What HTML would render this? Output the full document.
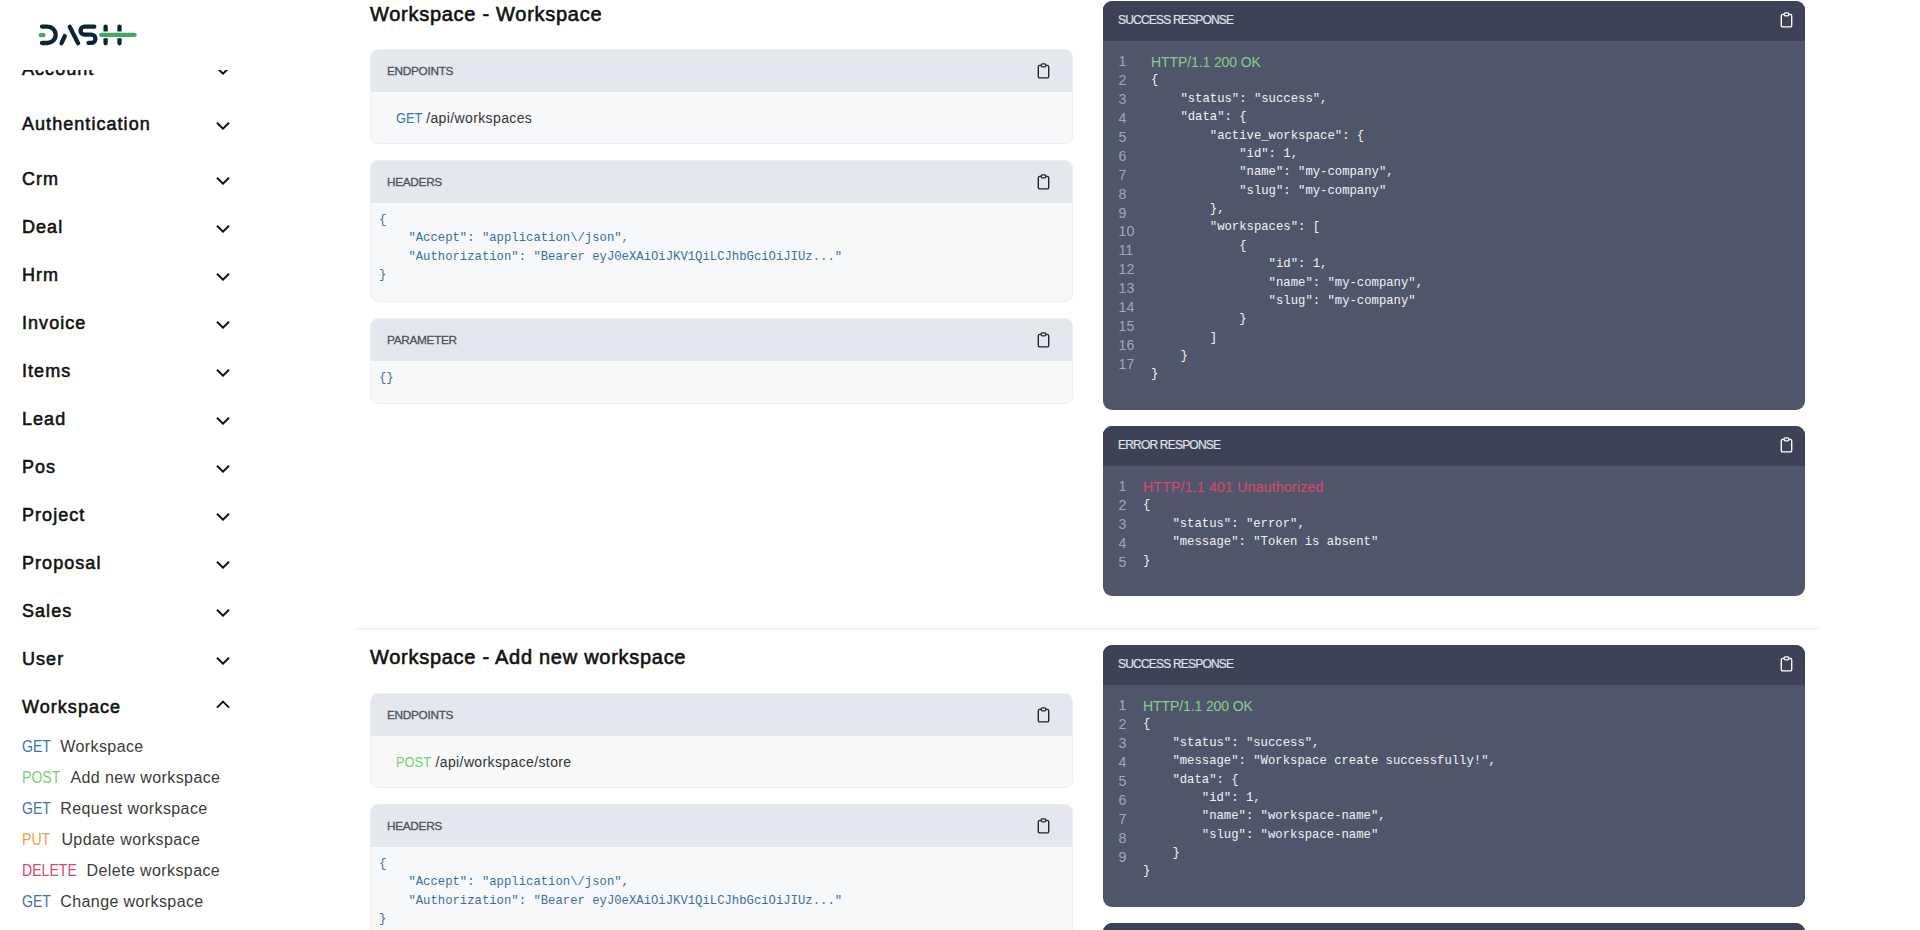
<!DOCTYPE html>
<html><head><meta charset="utf-8"><title>API Docs</title>
<style>
html,body{margin:0;padding:0;width:1920px;height:930px;overflow:hidden;background:#fff;font-family:"Liberation Sans",sans-serif;}
*{box-sizing:border-box}
.a{position:absolute}
/* sidebar */
.si{position:absolute;left:22px;font-size:18px;font-weight:normal;-webkit-text-stroke:0.55px #111;letter-spacing:1.05px;color:#111;line-height:24px;height:24px;white-space:nowrap}
.chev{position:absolute;left:215.8px;width:14px;height:10px}
.sub{position:absolute;left:22px;font-size:16px;color:#3b3b3b;line-height:20px;height:20px;white-space:nowrap}
.m{display:inline-block;transform:scaleX(0.88);transform-origin:0 0}.nm{position:absolute;top:0;letter-spacing:0.4px}
.get{color:#3a74a8}.post{color:#7bcd73}.put{color:#e3a548}.del{color:#d9466f}
.logo{position:absolute;left:0;top:0;width:300px;height:70px;background:#fff}
/* main */
.title{position:absolute;left:370px;font-size:20px;font-weight:normal;-webkit-text-stroke:0.6px #111;letter-spacing:0.72px;color:#111;line-height:26px;white-space:nowrap}
.card{position:absolute;left:370px;width:703px;border:1px solid #eceef2;border-radius:8px;background:#f7f8fa;overflow:hidden}
.card .hd{height:42px;background:#e4e7ed;position:relative}
.card .hd span{position:absolute;left:16px;top:14px;font-size:11.8px;font-weight:normal;-webkit-text-stroke:0.3px #4b5262;color:#4b5262;letter-spacing:-0.3px;line-height:14px}
.clip{position:absolute;width:13px;height:15.8px}
.em{display:inline-block;transform:scaleX(0.92);transform-origin:0 0}.pth{margin-left:-2.5px;letter-spacing:0.38px}
.ep{position:absolute;left:25px;font-size:14px;color:#333;line-height:18px;white-space:nowrap}
.code{position:absolute;left:8px;margin:0;font-family:"Liberation Mono",monospace;font-size:12.25px;line-height:18.375px;color:#3a6f9e;white-space:pre}
.panel{position:absolute;left:1103px;width:702px;border-radius:9px;background:#50566a;overflow:hidden}
.panel .hd{height:40px;background:#3e4256;position:relative}
.panel .hd span{position:absolute;left:15px;top:12px;font-size:12px;color:#dfe3ea;-webkit-text-stroke:0.2px #dfe3ea;letter-spacing:-0.8px;line-height:14px;white-space:nowrap}
.nums{position:absolute;left:15.5px;font-size:14.2px;line-height:18.93px;color:#a3a7b3;white-space:pre}
.pcode{position:absolute;margin:0;font-family:"Liberation Mono",monospace;font-size:12.25px;line-height:18.375px;color:#f1f2f4;white-space:pre}
.http{font-family:"Liberation Sans",sans-serif;font-size:14px;letter-spacing:0.25px;line-height:0;position:relative;top:1.5px}
.ok{color:#86cf8c;letter-spacing:-0.1px}.bad{color:#e0456c}
.sep{position:absolute;left:355px;width:1465px;top:628px;height:1px;background:#eeeeee}
</style></head><body>

<!-- SIDEBAR -->
<div class="si" style="top:57px">Account</div>
<div class="si" style="top:112px">Authentication</div>
<div class="si" style="top:167px">Crm</div>
<div class="si" style="top:215px">Deal</div>
<div class="si" style="top:263px">Hrm</div>
<div class="si" style="top:311px">Invoice</div>
<div class="si" style="top:359px">Items</div>
<div class="si" style="top:407px">Lead</div>
<div class="si" style="top:455px">Pos</div>
<div class="si" style="top:503px">Project</div>
<div class="si" style="top:551px">Proposal</div>
<div class="si" style="top:599px">Sales</div>
<div class="si" style="top:647px">User</div>
<div class="si" style="top:695px">Workspace</div>

<svg class="chev" style="top:66px" viewBox="0 0 14 10"><path d="M1 1.7 L7 7.7 L13 1.7" fill="none" stroke="#111" stroke-width="2"/></svg>
<svg class="chev" style="top:121px" viewBox="0 0 14 10"><path d="M1 1.7 L7 7.7 L13 1.7" fill="none" stroke="#111" stroke-width="2"/></svg>
<svg class="chev" style="top:176px" viewBox="0 0 14 10"><path d="M1 1.7 L7 7.7 L13 1.7" fill="none" stroke="#111" stroke-width="2"/></svg>
<svg class="chev" style="top:224px" viewBox="0 0 14 10"><path d="M1 1.7 L7 7.7 L13 1.7" fill="none" stroke="#111" stroke-width="2"/></svg>
<svg class="chev" style="top:272px" viewBox="0 0 14 10"><path d="M1 1.7 L7 7.7 L13 1.7" fill="none" stroke="#111" stroke-width="2"/></svg>
<svg class="chev" style="top:320px" viewBox="0 0 14 10"><path d="M1 1.7 L7 7.7 L13 1.7" fill="none" stroke="#111" stroke-width="2"/></svg>
<svg class="chev" style="top:368px" viewBox="0 0 14 10"><path d="M1 1.7 L7 7.7 L13 1.7" fill="none" stroke="#111" stroke-width="2"/></svg>
<svg class="chev" style="top:416px" viewBox="0 0 14 10"><path d="M1 1.7 L7 7.7 L13 1.7" fill="none" stroke="#111" stroke-width="2"/></svg>
<svg class="chev" style="top:464px" viewBox="0 0 14 10"><path d="M1 1.7 L7 7.7 L13 1.7" fill="none" stroke="#111" stroke-width="2"/></svg>
<svg class="chev" style="top:512px" viewBox="0 0 14 10"><path d="M1 1.7 L7 7.7 L13 1.7" fill="none" stroke="#111" stroke-width="2"/></svg>
<svg class="chev" style="top:560px" viewBox="0 0 14 10"><path d="M1 1.7 L7 7.7 L13 1.7" fill="none" stroke="#111" stroke-width="2"/></svg>
<svg class="chev" style="top:608px" viewBox="0 0 14 10"><path d="M1 1.7 L7 7.7 L13 1.7" fill="none" stroke="#111" stroke-width="2"/></svg>
<svg class="chev" style="top:656px" viewBox="0 0 14 10"><path d="M1 1.7 L7 7.7 L13 1.7" fill="none" stroke="#111" stroke-width="2"/></svg>
<svg class="chev" style="top:700px" viewBox="0 0 14 10"><path d="M1 7.6 L7 1.6 L13 7.6" fill="none" stroke="#111" stroke-width="2"/></svg>

<div class="sub" style="top:737px"><span class="get m">GET</span><span class="nm" style="left:38.3px">Workspace</span></div>
<div class="sub" style="top:768px"><span class="post m">POST</span><span class="nm" style="left:48.4px">Add new workspace</span></div>
<div class="sub" style="top:799px"><span class="get m">GET</span><span class="nm" style="left:38.3px">Request workspace</span></div>
<div class="sub" style="top:830px"><span class="put m">PUT</span><span class="nm" style="left:39.4px">Update workspace</span></div>
<div class="sub" style="top:861px"><span class="del m">DELETE</span><span class="nm" style="left:64.6px">Delete workspace</span></div>
<div class="sub" style="top:892px"><span class="get m">GET</span><span class="nm" style="left:38.3px">Change workspace</span></div>

<div class="logo">
<svg width="300" height="70" viewBox="0 0 300 70" style="position:absolute;left:0;top:0">
<g fill="none" stroke="#0b2637" stroke-width="4.3" stroke-linecap="round">
<path d="M42 26.6 H47.5 A8.2 8.2 0 0 1 47.5 43 H42"/>
<path d="M61.5 43.2 L64.8 36.1"/>
<path d="M69.7 26.8 L78.1 43.2"/>
<path d="M94.3 26.7 H84.5 A3.95 3.95 0 0 0 84.5 34.6 H91.3 A4.15 4.15 0 0 1 91.3 42.9 H88.5"/>
<path d="M105.6 26.6 V43.3 M119.5 26.6 V43.3"/>
</g>
<path d="M101.25 34.85 H134.5" stroke="#fff" stroke-width="6.6" stroke-linecap="round"/>
<path d="M101.25 34.85 H134.5" stroke="#3dac63" stroke-width="4.4" stroke-linecap="round"/>
<path d="M40.8 35.1 H43.4" stroke="#3dac63" stroke-width="4.4" stroke-linecap="round"/>
</svg>
</div>

<!-- MAIN -->
<div id="main">
<div class="title" style="top:1px">Workspace - Workspace</div>
<div class="card" style="top:49px;height:95px"><div class="hd"><span>ENDPOINTS</span><svg class="clip" style="left:666px;top:13px" viewBox="0 0 14 17"><path d="M4.3 2.6 H3 A1.6 1.6 0 0 0 1.4 4.2 V14.4 A1.6 1.6 0 0 0 3 16 H11 A1.6 1.6 0 0 0 12.6 14.4 V4.2 A1.6 1.6 0 0 0 11 2.6 H9.7" fill="none" stroke="#1f2533" stroke-width="1.5"/><rect x="4.4" y="1" width="5.2" height="3.2" rx="1.4" fill="none" stroke="#1f2533" stroke-width="1.4"/></svg></div><div class="ep" style="top:59px"><span class="get em">GET</span> <span class="pth">/api/workspaces</span></div></div>
<div class="card" style="top:160px;height:142px"><div class="hd"><span>HEADERS</span><svg class="clip" style="left:666px;top:13px" viewBox="0 0 14 17"><path d="M4.3 2.6 H3 A1.6 1.6 0 0 0 1.4 4.2 V14.4 A1.6 1.6 0 0 0 3 16 H11 A1.6 1.6 0 0 0 12.6 14.4 V4.2 A1.6 1.6 0 0 0 11 2.6 H9.7" fill="none" stroke="#1f2533" stroke-width="1.5"/><rect x="4.4" y="1" width="5.2" height="3.2" rx="1.4" fill="none" stroke="#1f2533" stroke-width="1.4"/></svg></div><pre class="code" style="top:50px">{
    "Accept": "application\/json",
    "Authorization": "Bearer eyJ0eXAiOiJKV1QiLCJhbGciOiJIUz..."
}</pre></div>
<div class="card" style="top:318px;height:86px"><div class="hd"><span>PARAMETER</span><svg class="clip" style="left:666px;top:13px" viewBox="0 0 14 17"><path d="M4.3 2.6 H3 A1.6 1.6 0 0 0 1.4 4.2 V14.4 A1.6 1.6 0 0 0 3 16 H11 A1.6 1.6 0 0 0 12.6 14.4 V4.2 A1.6 1.6 0 0 0 11 2.6 H9.7" fill="none" stroke="#1f2533" stroke-width="1.5"/><rect x="4.4" y="1" width="5.2" height="3.2" rx="1.4" fill="none" stroke="#1f2533" stroke-width="1.4"/></svg></div><pre class="code" style="top:50px">{}</pre></div>
<div class="title" style="top:644px">Workspace - Add new workspace</div>
<div class="card" style="top:693px;height:95px"><div class="hd"><span>ENDPOINTS</span><svg class="clip" style="left:666px;top:13px" viewBox="0 0 14 17"><path d="M4.3 2.6 H3 A1.6 1.6 0 0 0 1.4 4.2 V14.4 A1.6 1.6 0 0 0 3 16 H11 A1.6 1.6 0 0 0 12.6 14.4 V4.2 A1.6 1.6 0 0 0 11 2.6 H9.7" fill="none" stroke="#1f2533" stroke-width="1.5"/><rect x="4.4" y="1" width="5.2" height="3.2" rx="1.4" fill="none" stroke="#1f2533" stroke-width="1.4"/></svg></div><div class="ep" style="top:59px"><span class="post em">POST</span> <span class="pth">/api/workspace/store</span></div></div>
<div class="card" style="top:804px;height:142px"><div class="hd"><span>HEADERS</span><svg class="clip" style="left:666px;top:13px" viewBox="0 0 14 17"><path d="M4.3 2.6 H3 A1.6 1.6 0 0 0 1.4 4.2 V14.4 A1.6 1.6 0 0 0 3 16 H11 A1.6 1.6 0 0 0 12.6 14.4 V4.2 A1.6 1.6 0 0 0 11 2.6 H9.7" fill="none" stroke="#1f2533" stroke-width="1.5"/><rect x="4.4" y="1" width="5.2" height="3.2" rx="1.4" fill="none" stroke="#1f2533" stroke-width="1.4"/></svg></div><pre class="code" style="top:50px">{
    "Accept": "application\/json",
    "Authorization": "Bearer eyJ0eXAiOiJKV1QiLCJhbGciOiJIUz..."
}</pre></div>
<div class="panel" style="top:1px;height:409px"><div class="hd"><span>SUCCESS RESPONSE</span><svg class="clip" style="left:677px;top:11px" viewBox="0 0 14 17"><path d="M4.3 2.6 H3 A1.6 1.6 0 0 0 1.4 4.2 V14.4 A1.6 1.6 0 0 0 3 16 H11 A1.6 1.6 0 0 0 12.6 14.4 V4.2 A1.6 1.6 0 0 0 11 2.6 H9.7" fill="none" stroke="#ffffff" stroke-width="1.5"/><rect x="4.4" y="1" width="5.2" height="3.2" rx="1.4" fill="none" stroke="#ffffff" stroke-width="1.4"/></svg></div><div class="nums" style="top:51px">1
2
3
4
5
6
7
8
9
10
11
12
13
14
15
16
17</div><pre class="pcode" style="left:48px;top:52px"><span class="http ok">HTTP/1.1 200 OK</span>
{
    "status": "success",
    "data": {
        "active_workspace": {
            "id": 1,
            "name": "my-company",
            "slug": "my-company"
        },
        "workspaces": [
            {
                "id": 1,
                "name": "my-company",
                "slug": "my-company"
            }
        ]
    }
}</pre></div>
<div class="panel" style="top:426px;height:170px"><div class="hd"><span>ERROR RESPONSE</span><svg class="clip" style="left:677px;top:11px" viewBox="0 0 14 17"><path d="M4.3 2.6 H3 A1.6 1.6 0 0 0 1.4 4.2 V14.4 A1.6 1.6 0 0 0 3 16 H11 A1.6 1.6 0 0 0 12.6 14.4 V4.2 A1.6 1.6 0 0 0 11 2.6 H9.7" fill="none" stroke="#ffffff" stroke-width="1.5"/><rect x="4.4" y="1" width="5.2" height="3.2" rx="1.4" fill="none" stroke="#ffffff" stroke-width="1.4"/></svg></div><div class="nums" style="top:51px">1
2
3
4
5</div><pre class="pcode" style="left:40px;top:52px"><span class="http bad">HTTP/1.1 401 Unauthorized</span>
{
    "status": "error",
    "message": "Token is absent"
}</pre></div>
<div class="sep"></div>
<div class="panel" style="top:645px;height:262px"><div class="hd"><span>SUCCESS RESPONSE</span><svg class="clip" style="left:677px;top:11px" viewBox="0 0 14 17"><path d="M4.3 2.6 H3 A1.6 1.6 0 0 0 1.4 4.2 V14.4 A1.6 1.6 0 0 0 3 16 H11 A1.6 1.6 0 0 0 12.6 14.4 V4.2 A1.6 1.6 0 0 0 11 2.6 H9.7" fill="none" stroke="#ffffff" stroke-width="1.5"/><rect x="4.4" y="1" width="5.2" height="3.2" rx="1.4" fill="none" stroke="#ffffff" stroke-width="1.4"/></svg></div><div class="nums" style="top:51px">1
2
3
4
5
6
7
8
9</div><pre class="pcode" style="left:40px;top:52px"><span class="http ok">HTTP/1.1 200 OK</span>
{
    "status": "success",
    "message": "Workspace create successfully!",
    "data": {
        "id": 1,
        "name": "workspace-name",
        "slug": "workspace-name"
    }
}</pre></div>
<div class="panel" style="top:923px;height:170px"><div class="hd"><span>ERROR RESPONSE</span><svg class="clip" style="left:677px;top:11px" viewBox="0 0 14 17"><path d="M4.3 2.6 H3 A1.6 1.6 0 0 0 1.4 4.2 V14.4 A1.6 1.6 0 0 0 3 16 H11 A1.6 1.6 0 0 0 12.6 14.4 V4.2 A1.6 1.6 0 0 0 11 2.6 H9.7" fill="none" stroke="#ffffff" stroke-width="1.5"/><rect x="4.4" y="1" width="5.2" height="3.2" rx="1.4" fill="none" stroke="#ffffff" stroke-width="1.4"/></svg></div><div class="nums" style="top:51px">1
2
3
4
5</div><pre class="pcode" style="left:40px;top:52px"><span class="http bad">HTTP/1.1 401 Unauthorized</span>
{
    "status": "error",
    "message": "Token is absent"
}</pre></div>
</div>

</body></html>
